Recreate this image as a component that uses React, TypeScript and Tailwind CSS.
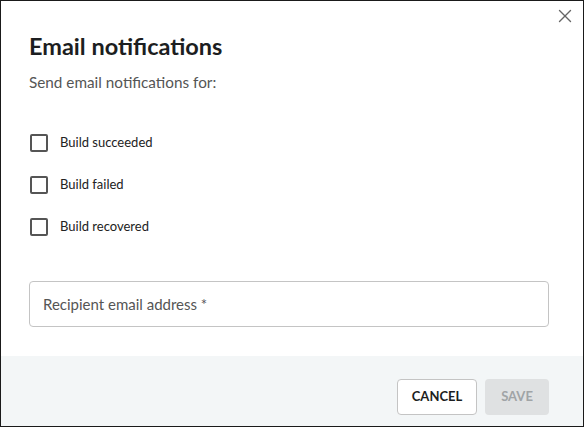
import { X } from "lucide-react";

const options = ["Build succeeded", "Build failed", "Build recovered"];

function App() {
    return (
        <div className="w-[584px] h-[427px] bg-white border border-[#1a1a1a] flex flex-col font-['Lato',sans-serif] text-[#222] relative">
            <button className="absolute right-[7px] top-[4px] text-[#666]">
                <X size={22} strokeWidth={1.5} />
            </button>
            <div className="flex-1 pl-[28px] pr-[34px] pt-[31px]">
                <h2 className="text-[23.5px] font-bold leading-[28px] text-[#1c1e21]">Email notifications</h2>
                <p className="mt-[12px] text-[15.3px] leading-[20px] text-[#555]">Send email notifications for:</p>
                <div className="mt-[30px] flex flex-col">
                    {options.map(opt => (
                        <label key={opt} className="flex items-center h-[42px] gap-[12px]">
                            <span className="w-[18px] h-[18px] border-2 border-[#555] rounded-[2px] ml-[1px]"></span>
                            <span className="text-[13px] text-[#222]">{opt}</span>
                        </label>
                    ))}
                </div>
                <div className="mt-[33px] h-[46px] border border-[#c4c4c4] rounded-[4px] flex items-center px-[13px]">
                    <span className="text-[15px] text-[#555]">Recipient email address *</span>
                </div>
            </div>
            <div className="h-[70px] bg-[#f3f6f7] flex items-start justify-end gap-[8px] pt-[23px] pr-[34px]">
                <button className="w-[80px] h-[36px] bg-white border border-[#c4c4c4] rounded-[4px] text-[13px] font-bold text-[#1c1e21]">CANCEL</button>
                <button className="w-[64px] h-[36px] bg-[#dfe1e2] rounded-[4px] text-[13px] font-bold text-[#a0a4a6]">SAVE</button>
            </div>
        </div>
    );
}

export default App;
